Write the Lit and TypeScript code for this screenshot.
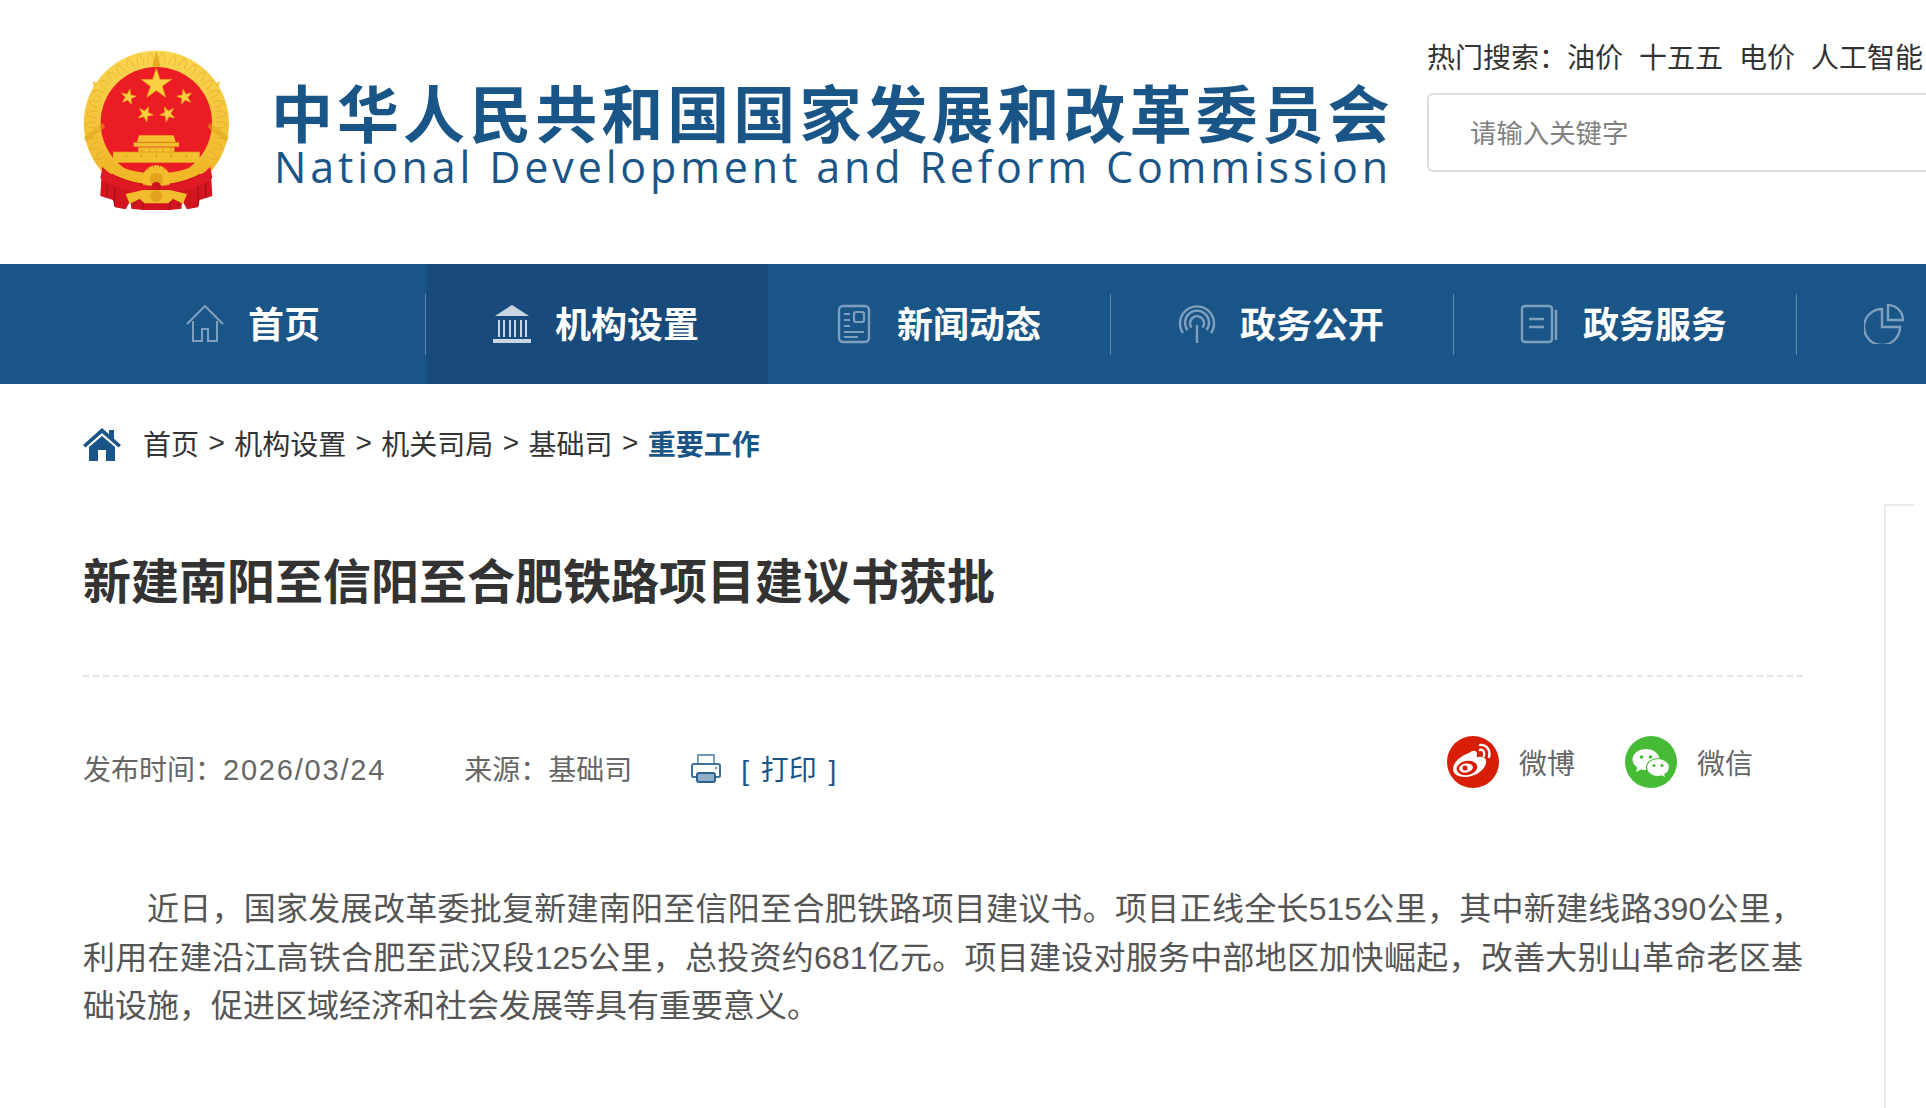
import { LitElement, html, css, svg } from "lit";
import { customElement } from "lit/decorators.js";

const star = (cx: number, cy: number, r: number, rot = 0) => {
  const pts: string[] = [];
  for (let i = 0; i < 10; i++) {
    const rad = i % 2 ? r * 0.382 : r;
    const a = ((-90 + rot + i * 36) * Math.PI) / 180;
    pts.push(`${(cx + rad * Math.cos(a)).toFixed(1)},${(cy + rad * Math.sin(a)).toFixed(1)}`);
  }
  return svg`<polygon points=${pts.join(" ")} fill="#f9d03f" stroke="#e9a91c" stroke-width="2"></polygon>`;
};

const gearTeeth = () => {
  const t = [];
  for (let i = 0; i < 14; i++) {
    const a = (i * 360) / 14;
    t.push(svg`<rect x="282" y="406" width="16" height="14" fill="#f3bd2c" transform="rotate(${a} 290 448)"></rect>`);
  }
  return t;
};

const wheat = () => {
  const out = [];
  for (let i = 0; i < 16; i++) {
    const a = 5 + i * 9.6;
    for (const s of [1, -1]) {
      out.push(svg`<path d="M290 68c-8 8-10 18-9 30M290 68c8 8 10 18 9 30" fill="none" stroke="#d79a1a" stroke-width="1.800" opacity=".7" transform="rotate(${s * a} 290 280)"></path>`);
    }
  }
  return out;
};

const emblem = html`<svg class="emblem" viewBox="70 60 441 480" aria-hidden="true">
  <defs>
    <clipPath id="upper"><rect x="60" y="50" width="460" height="382"></rect></clipPath>
    <linearGradient id="gold" x1="0" y1="0" x2="0" y2="1"><stop offset="0" stop-color="#f9d551"></stop><stop offset="1" stop-color="#efb324"></stop></linearGradient>
  </defs>
  <path d="M126 432l-4 66 38 12 5 22 33 6 14-26 3 24 35 4h80l35-4 3-24 14 26 33-6 5-22 38-12-4-66z" fill="#d2151f"></path>
  <path d="M144 450l-3 54M166 470l-2 58M222 505l2 26M250 505v30M330 505v30M358 505l-2 26M414 470l2 58M436 450l3 54" fill="none" stroke="#8f0f17" stroke-width="2.500"></path>
  <g clip-path="url(#upper)">
    <circle cx="290" cy="280" r="218" fill="url(#gold)"></circle>
    ${wheat()}
    <circle cx="290" cy="278" r="167" fill="#ec1c24"></circle>
  </g>
  <path d="M290 62l-12 48h24z" fill="#e7ac22"></path>
  <path d="M100 152l14 12 -12 8zM480 152l-14 12 12 8z" fill="#f3c53a"></path>
  <path d="M72 322l58-44 6 14-56 46zM508 322l-58-44-6 14 56 46z" fill="#e2a51e" opacity=".55"></path>
  ${star(290, 163, 48)}${star(206, 201, 24, 12)}${star(375, 201, 24, -12)}${star(257, 252, 24, 25)}${star(324, 252, 24, -25)}
  <g fill="#f2bf2f">
    <path d="M238 316h104l6 20h-116z"></path>
    <rect x="222" y="338" width="136" height="12"></rect>
    <rect x="236" y="352" width="108" height="14"></rect>
    <rect x="160" y="366" width="260" height="32"></rect>
  </g>
  <path d="M222 337h136M160 366h260M246 352v14M270 352v14M290 352v14M310 352v14M334 352v14" fill="none" stroke="#d3971a" stroke-width="2"></path>
  <path d="M245 382v-10M290 382v-10M335 382v-10M200 382v-6M380 382v-6" fill="none" stroke="#cc8f18" stroke-width="3"></path>
  <path d="M140 378c25 32 75 50 150 54 75-4 125-22 150-54l12 30c-32 32-92 54-162 56-70-2-130-24-162-56z" fill="#f0b828"></path>
  ${gearTeeth()}
  <circle cx="290" cy="448" r="34" fill="#f3bd2c"></circle>
  <circle cx="290" cy="448" r="20" fill="#e3a31f"></circle>
  <path d="M128 410c37 40 97 56 162 58 65-2 125-18 162-58l6 35c-38 33-103 43-168 43s-130-10-168-43z" fill="#e01a24"></path>
  <circle cx="290" cy="470" r="14" fill="#c9141d"></circle>
  <path d="M198 492l52-12h80l52 12-12 30-30-16-14 14h-72l-14-14-30 16z" fill="#f2bd2d"></path>
  <circle cx="290" cy="498" r="18" fill="#e3a31f"></circle>
</svg>`;

const navHome = svg`<path d="M2 20L20 2l18 18M8 17v20h9V25h6v12h9V17" fill="none" stroke-width="2"></path>`;
const navOrg = svg`<path d="M20 1L3 12h34z" fill="currentColor" stroke="none"></path><path d="M7 16v17M12 16v17M18 16v17M23 16v17M29 16v17M34 16v17" fill="none" stroke-width="2"></path><path d="M1 37h38" fill="none" stroke-width="4"></path>`;
const navNews = svg`<rect x="5" y="2" width="30" height="36" rx="4" fill="none" stroke-width="2.400"></rect><rect x="20" y="8" width="10" height="10" rx="2" fill="none" stroke-width="2.200"></rect><path d="M10 10h6M10 16h6M10 22h6M10 28h20M10 33h14" fill="none" stroke-width="2.200"></path>`;
const navOpen = svg`<path d="M20 39V21M6 29a17 17 0 1 1 28 0M10.500 26a12 12 0 1 1 19 0M14.500 23.500a7 7 0 1 1 11 0" fill="none" stroke-width="2.400"></path>`;
const navService = svg`<rect x="2" y="2" width="30" height="36" rx="3" fill="none" stroke-width="2.400"></rect><path d="M36 6v30M9 15h15M9 23h15" fill="none" stroke-width="2.600"></path>`;
const navData = svg`<path d="M18 5a18 18 0 1 0 18 18H18z" fill="none" stroke-width="2.400"></path><path d="M24 1a15 15 0 0 1 15 15H24z" fill="none" stroke-width="2.400"></path>`;

const navItems = [
  { label: "首页", icon: navHome },
  { label: "机构设置", icon: navOrg, active: true },
  { label: "新闻动态", icon: navNews },
  { label: "政务公开", icon: navOpen },
  { label: "政务服务", icon: navService },
];

const crumbs = ["首页", "机构设置", "机关司局", "基础司"];

@customElement("app-root")
export class AppRoot extends LitElement {
  static styles = css`
    :host {
      display: block;
      width: 1926px;
      height: 1108px;
      overflow: hidden;
      background: #fff;
      font-family: "Liberation Sans", "Noto Sans CJK SC", sans-serif;
      color: #333;
    }
    .header { display: flex; height: 264px; padding-left: 83px; }
    .emblem { display: block; width: 147px; height: 160px; margin-top: 50px; flex: none; }
    .brand { margin: 76px 0 0 41px; width: 1121px; flex: none; color: #1a5587; }
    .brand-cn { font-family: "Noto Sans CJK SC", sans-serif; font-size: 62px; line-height: 70px; font-weight: 700; letter-spacing: 4.05px; white-space: nowrap; }
    .brand-en { font-family: "Open Sans", sans-serif; font-size: 43px; line-height: 41px; letter-spacing: 3.85px; white-space: nowrap; margin-left: 3px; }
    .search { margin: 39px 0 0 35px; flex: none; width: 600px; }
    .hot { display: flex; font-size: 28px; line-height: 40px; white-space: nowrap; }
    .hot span + span { margin-left: 16px; }
    .hot .hot-label { margin-right: -16px; }
    .box { margin-top: 14px; height: 79px; box-sizing: border-box; border: 2px solid #ddd; border-radius: 6px; padding: 0 0 3px 41px; display: flex; align-items: center; font-size: 26.400px; color: #808080; }

    .nav { display: flex; height: 120px; padding-left: 83px; background: #1a5587; overflow: hidden; }
    .item { width: 342px; box-sizing: border-box; padding-right: 3px; flex: none; display: flex; align-items: center; justify-content: center; gap: 24px; color: #fff; font-size: 36px; font-weight: 700; white-space: nowrap; }
    .item span { padding-bottom: 4px; margin-left: -1px; }
    .item.active { background: #184a7b; }
    .item svg { width: 40px; height: 40px; flex: none; stroke: #7f9fbe; color: #7f9fbe; }
    .item.active svg { stroke: #c9d6e3; color: #c9d6e3; }
    .sep { width: 1px; height: 61px; flex: none; align-self: center; background: #5f88ab; }
    .item.last { justify-content: flex-start; padding: 0 0 0 67px; }

    .main { padding: 0 0 0 83px; }
    .crumbs { height: 120px; display: flex; align-items: center; font-size: 28px; white-space: nowrap; }
    .crumbs span { padding-bottom: 2px; }
    .crumbs .home { width: 38px; height: 34px; margin-right: 22px; flex: none; }
    .crumbs .gt { margin: 0 9.400px; }
    .crumbs .now { color: #1a5587; font-weight: 700; }
    .row { display: flex; gap: 81px; height: 640px; }
    .article { width: 1720px; flex: none; }
    .title { margin: 0; height: 171px; line-height: 158px; font-size: 48px; font-weight: 700; white-space: nowrap; border-bottom: 2px dashed #e4e4e4; }
    .side { width: 28px; flex: none; border-left: 2px solid #e9e9ef; border-top: 2px solid #e9e9ef; }
    .meta { display: flex; align-items: center; height: 186px; font-size: 28px; color: #666; white-space: nowrap; margin-top: -2px; }
    .date { font-size: 29px; letter-spacing: 1.800px; }
    .source { margin-left: 78px; }
    .print { display: flex; align-items: center; margin-left: 58px; color: #1a5587; word-spacing: 4px; }
    .print svg { width: 32px; height: 32px; margin-right: 19px; }
    .share { margin-left: auto; margin-right: 50px; display: flex; align-items: center; gap: 50px; transform: translateY(-6px); }
    .share div { display: flex; align-items: center; gap: 20px; }
    .share svg { width: 52px; height: 52px; }
    .body { margin: 24px 0 0; font-size: 32px; line-height: 48.500px; color: #555; text-indent: 2em; text-align: justify; }
  `;

  render() {
    return html`
      <header class="header">
        ${emblem}
        <div class="brand">
          <div class="brand-cn">中华人民共和国国家发展和改革委员会</div>
          <div class="brand-en">National Development and Reform Commission</div>
        </div>
        <div class="search">
          <div class="hot">
            <span class="hot-label">热门搜索：</span><span>油价</span><span>十五五</span><span>电价</span><span>人工智能</span>
          </div>
          <div class="box">请输入关键字</div>
        </div>
      </header>

      <nav class="nav">
        ${navItems.map(
          (n) => html`
            <div class="item ${n.active ? "active" : ""}">
              <svg viewBox="0 0 40 40" aria-hidden="true">${n.icon}</svg><span>${n.label}</span>
            </div>
            ${n.active ? "" : html`<div class="sep"></div>`}
          `
        )}
        <div class="item last"><svg viewBox="0 0 40 40" aria-hidden="true">${navData}</svg></div>
      </nav>

      <main class="main">
        <div class="crumbs">
          <svg class="home" viewBox="0 0 38 34" aria-hidden="true">
            <path d="M19 1L0 18l2.500 2.500L19 6l16.500 14.500L38 18l-7-6.200V3h-5v4.300z" fill="#1a5587"></path>
            <path d="M6 20L19 9l13 11v14h-9V23h-8v11H6z" fill="#1a5587"></path>
          </svg>
          ${crumbs.map((c) => html`<span>${c}</span><span class="gt">&gt;</span>`)}
          <span class="now">重要工作</span>
        </div>
        <div class="row">
          <article class="article">
            <h1 class="title">新建南阳至信阳至合肥铁路项目建议书获批</h1>
            <div class="meta">
              <span>发布时间：<span class="date">2026/03/24</span></span>
              <span class="source">来源：基础司</span>
              <span class="print">
                <svg viewBox="0 0 32 32" aria-hidden="true">
                  <path d="M8 12V3h16v9" fill="none" stroke="#7497b8" stroke-width="1.800"></path>
                  <path d="M7 25H3a1 1 0 0 1-1-1V14a2 2 0 0 1 2-2h24a2 2 0 0 1 2 2v10a1 1 0 0 1-1 1h-4" fill="none" stroke="#3f6f9b" stroke-width="2"></path>
                  <rect x="7" y="21" width="18" height="9" rx="2" fill="#8fadc9" stroke="#2b6090" stroke-width="2"></rect>
                  <circle cx="26" cy="16" r="1.300" fill="#7d9fbf"></circle>
                </svg>
                [ 打印 ]
              </span>
              <div class="share">
                <div>
                  <svg viewBox="0 0 52 52" aria-hidden="true">
                    <circle cx="26" cy="26" r="26" fill="#d81e06"></circle>
                    <path d="M22 17c4-3 8-3 8 1 0 2-1 3 1 3 5-1 9 1 8 6-1 7-11 14-21 14-7 0-12-3-12-8 0-6 7-13 16-16z" fill="#fff"></path>
                    <ellipse cx="20" cy="32" rx="10.500" ry="7" fill="#d81e06" transform="rotate(-10 20 32)"></ellipse>
                    <ellipse cx="19" cy="32" rx="7" ry="4.500" fill="#fff" transform="rotate(-10 19 32)"></ellipse>
                    <circle cx="18" cy="32" r="2.500" fill="#d81e06"></circle>
                    <path d="M33 9c6-1 11 5 9 12M33 14c3-1 5 2 4 6" fill="none" stroke="#fff" stroke-width="2.400" stroke-linecap="round"></path>
                  </svg>
                  <span>微博</span>
                </div>
                <div>
                  <svg viewBox="0 0 52 52" aria-hidden="true">
                    <circle cx="26" cy="26" r="26" fill="#46bb36"></circle>
                    <path d="M21 13c-7.500 0-13.500 4.700-13.500 10.500 0 3.300 2 6.200 5 8.100L11 36l5-2.600c1.500.4 3 .6 5 .6 7.500 0 13.500-4.700 13.500-10.500S28.500 13 21 13z" fill="#fff"></path>
                    <circle cx="16.500" cy="21" r="1.800" fill="#46bb36"></circle><circle cx="25.500" cy="21" r="1.800" fill="#46bb36"></circle>
                    <path d="M33 22.500c-6.300 0-11.500 4-11.500 9s5.200 9 11.500 9c1.300 0 2.600-.2 3.800-.5L41 42.500l-1.200-4c2.700-1.600 4.700-4 4.700-7 0-5-5.200-9-11.500-9z" fill="#fff" stroke="#46bb36" stroke-width="1.200"></path>
                    <circle cx="29" cy="29.500" r="1.600" fill="#46bb36"></circle><circle cx="37" cy="29.500" r="1.600" fill="#46bb36"></circle>
                  </svg>
                  <span>微信</span>
                </div>
              </div>
            </div>
            <p class="body">近日，国家发展改革委批复新建南阳至信阳至合肥铁路项目建议书。项目正线全长515公里，其中新建线路390公里，利用在建沿江高铁合肥至武汉段125公里，总投资约681亿元。项目建设对服务中部地区加快崛起，改善大别山革命老区基础设施，促进区域经济和社会发展等具有重要意义。</p>
          </article>
          <aside class="side"></aside>
        </div>
      </main>
    `;
  }
}
